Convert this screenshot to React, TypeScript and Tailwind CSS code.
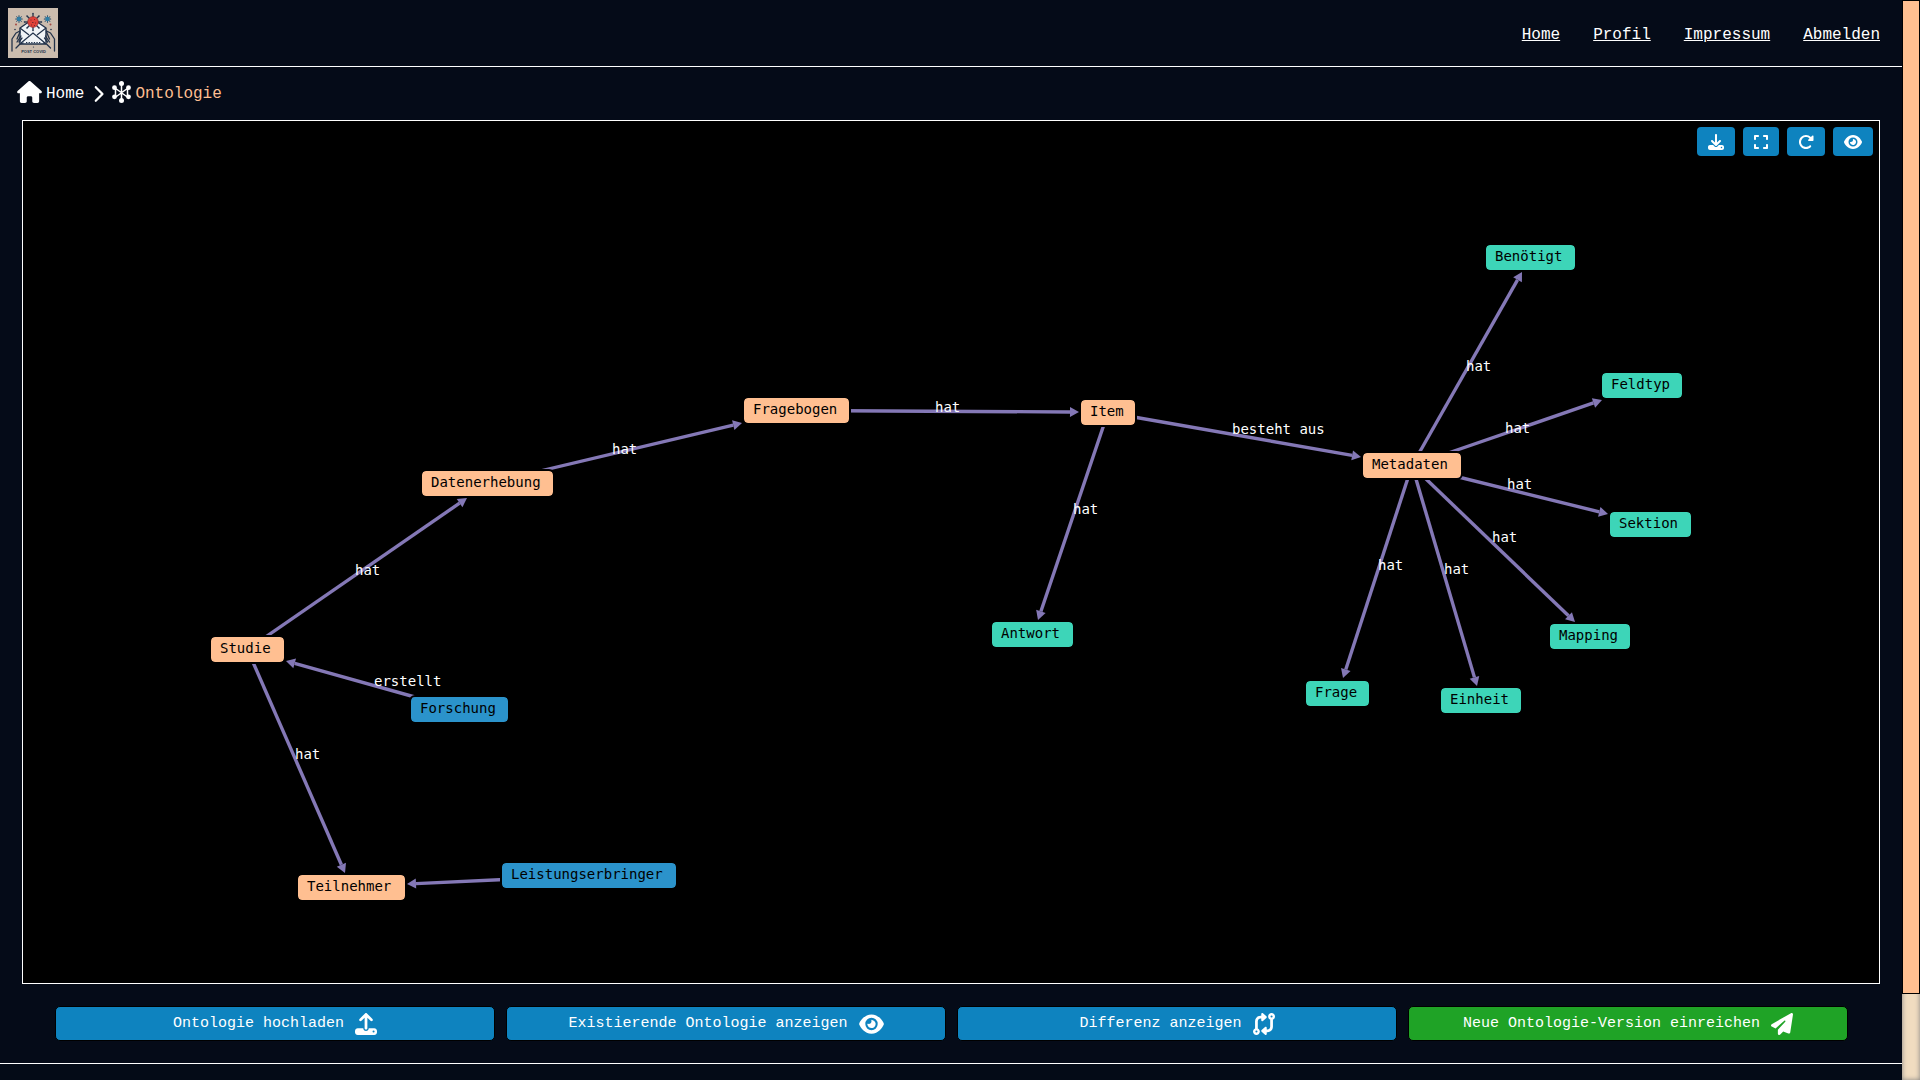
import React from "react";
import {
  FaHouse,
  FaChevronRight,
  FaDownload,
  FaExpand,
  FaRotateRight,
  FaEye,
  FaUpload,
  FaCodeCompare,
  FaPaperPlane,
} from "react-icons/fa6";

type Kind = "core" | "leaf" | "actor";
type GraphNode = { label: string; x: number; y: number; w: number; kind: Kind };
type GraphEdge = {
  from: string;
  tip: [number, number];
  label?: string;
  at?: [number, number];
};

const NODE_HEIGHT = 25;

const kindClass: Record<Kind, string> = {
  core: "bg-[#ffbf91]",
  leaf: "bg-[#3dd5b8]",
  actor: "bg-[#2b93cb]",
};

const nodes: GraphNode[] = [
  { label: "Studie", x: 188, y: 516, w: 73, kind: "core" },
  { label: "Datenerhebung", x: 399, y: 350, w: 131, kind: "core" },
  { label: "Forschung", x: 388, y: 576, w: 97, kind: "actor" },
  { label: "Teilnehmer", x: 275, y: 754, w: 107, kind: "core" },
  { label: "Leistungserbringer", x: 479, y: 742, w: 174, kind: "actor" },
  { label: "Fragebogen", x: 721, y: 277, w: 105, kind: "core" },
  { label: "Item", x: 1058, y: 279, w: 54, kind: "core" },
  { label: "Antwort", x: 969, y: 501, w: 81, kind: "leaf" },
  { label: "Benötigt", x: 1463, y: 124, w: 89, kind: "leaf" },
  { label: "Feldtyp", x: 1579, y: 252, w: 80, kind: "leaf" },
  { label: "Metadaten", x: 1340, y: 332, w: 98, kind: "core" },
  { label: "Sektion", x: 1587, y: 391, w: 81, kind: "leaf" },
  { label: "Mapping", x: 1527, y: 503, w: 80, kind: "leaf" },
  { label: "Frage", x: 1283, y: 560, w: 63, kind: "leaf" },
  { label: "Einheit", x: 1418, y: 567, w: 80, kind: "leaf" },
];

const edges: GraphEdge[] = [
  { from: "Studie", tip: [444, 377], label: "hat", at: [332, 454] },
  { from: "Datenerhebung", tip: [719, 302], label: "hat", at: [589, 333] },
  { from: "Fragebogen", tip: [1056, 291], label: "hat", at: [912, 291] },
  { from: "Item", tip: [1338, 336], label: "besteht aus", at: [1209, 313] },
  { from: "Item", tip: [1015, 499], label: "hat", at: [1050, 393] },
  { from: "Studie", tip: [322, 752], label: "hat", at: [272, 638] },
  { from: "Forschung", tip: [263, 540], label: "erstellt", at: [351, 565] },
  { from: "Leistungserbringer", tip: [384, 763] },
  { from: "Metadaten", tip: [1499, 151], label: "hat", at: [1443, 250] },
  { from: "Metadaten", tip: [1579, 279], label: "hat", at: [1482, 312] },
  { from: "Metadaten", tip: [1585, 393], label: "hat", at: [1484, 368] },
  { from: "Metadaten", tip: [1552, 501], label: "hat", at: [1469, 421] },
  { from: "Metadaten", tip: [1320, 557], label: "hat", at: [1355, 449] },
  { from: "Metadaten", tip: [1454, 565], label: "hat", at: [1421, 453] },
];

function Edge({ edge }: { edge: GraphEdge }) {
  const node = nodes.find((n) => n.label === edge.from)!;
  const x1 = node.x + node.w / 2;
  const y1 = node.y + NODE_HEIGHT / 2;
  const [tx, ty] = edge.tip;
  const len = Math.hypot(tx - x1, ty - y1);
  const ux = (tx - x1) / len;
  const uy = (ty - y1) / len;
  const bx = tx - ux * 9;
  const by = ty - uy * 9;
  const points = [
    [tx, ty],
    [bx - uy * 5, by + ux * 5],
    [bx + uy * 5, by - ux * 5],
  ]
    .map((p) => p.join(","))
    .join(" ");
  return (
    <g>
      <line x1={x1} y1={y1} x2={bx} y2={by} stroke="#8478b6" strokeWidth="3.4" />
      <polygon points={points} fill="#8478b6" />
    </g>
  );
}

function Graph() {
  return (
    <div className="absolute inset-0 overflow-hidden font-['DejaVu_Sans_Mono','Liberation_Mono',monospace] text-[14px]">
      <svg className="absolute inset-0 size-full" aria-hidden="true">
        {edges.map((e, i) => (
          <Edge key={i} edge={e} />
        ))}
      </svg>
      {nodes.map((n) => (
        <div
          key={n.label}
          className={`absolute h-[25px] rounded-[4px] pl-[9px] leading-[23px] whitespace-nowrap text-black outline-2 outline-black ${kindClass[n.kind]}`}
          style={{ left: n.x, top: n.y, width: n.w }}
        >
          {n.label}
        </div>
      ))}
      {edges.map(
        (e, i) =>
          e.label &&
          e.at && (
            <span
              key={i}
              className="absolute leading-5 whitespace-nowrap text-white"
              style={{ left: e.at[0], top: e.at[1] - 15 }}
            >
              {e.label}
            </span>
          ),
      )}
    </div>
  );
}

function NodesIcon() {
  return (
    <svg viewBox="0 0 19 22" className="h-[22px] w-[19px] text-white" fill="currentColor" stroke="currentColor" aria-hidden="true">
      <path
        d="M9.500 3v16M3 7l13 9.500M16 7 3 16.500M3.500 7v9.500M15.500 7v9.500"
        fill="none"
        strokeWidth="1.5"
      />
      <g stroke="none">
        <circle cx="9.500" cy="2.600" r="2.500" />
        <circle cx="9.500" cy="19.400" r="2.500" />
        <circle cx="2.500" cy="6.700" r="2.400" />
        <circle cx="16.500" cy="6.700" r="2.400" />
        <circle cx="2.500" cy="15.800" r="2.400" />
        <circle cx="16.500" cy="15.800" r="2.400" />
      </g>
    </svg>
  );
}

type SpikesProps = { cx: number; cy: number; r1: number; r2: number; n: number; color: string; width: number };

function Spikes({ cx, cy, r1, r2, n, color, width }: SpikesProps) {
  return (
    <g stroke={color} strokeWidth={width} fill={color}>
      {Array.from({ length: n }, (_, i) => {
        const a = (i * 2 * Math.PI) / n - Math.PI / 2;
        const c = Math.cos(a);
        const s = Math.sin(a);
        return (
          <g key={i}>
            <line x1={cx + c * r1} y1={cy + s * r1} x2={cx + c * r2} y2={cy + s * r2} />
            <circle cx={cx + c * r2} cy={cy + s * r2} r={width * 0.6} stroke="none" />
          </g>
        );
      })}
    </g>
  );
}

function Logo() {
  const ink = "#22324a";
  const hand = "M4 43V31l4-6 4-2M8 40l4-4 3-1M12 24l-3 7M13 28l-4 6M14 30l-3 4";
  return (
    <svg viewBox="0 0 50 50" className="size-[50px]" role="img" aria-label="Post Covid">
      <rect width="50" height="50" fill="#cbbcae" />
      <path d="M12 20 25 11l13 9v16H12z" fill="#f1f4f7" stroke={ink} strokeWidth="1.4" strokeLinejoin="round" />
      <path d="m12 20 9 7m17-7-9 7M13 35l12-10 12 10" fill="none" stroke={ink} strokeWidth="1.2" />
      <path d="M18 34.500h15" stroke={ink} strokeWidth="1.2" strokeDasharray="1.300 1.300" />
      <Spikes cx={25} cy={14} r1={5} r2={8.5} n={8} color={ink} width={1.3} />
      <circle cx="25" cy="14" r="5.4" fill="#e0433a" stroke="#7c2a30" strokeWidth="0.6" />
      <path d="M22.500 12h1M26 11.500h1M24 14.500h1.500M27 15h1M23 17h1M26 17.500h1" stroke="#7c2a30" strokeWidth="1" />
      <Spikes cx={11} cy={11} r1={1} r2={3.2} n={8} color="#2c4f6b" width={0.9} />
      <circle cx="11" cy="11" r="2.200" fill="#2f7ea6" />
      <Spikes cx={39.5} cy={11} r1={1} r2={3.2} n={8} color="#2c4f6b" width={0.9} />
      <circle cx="39.500" cy="11" r="2.200" fill="#2f7ea6" />
      <g fill="#a34a44">
        <circle cx="8" cy="16.500" r="1" />
        <circle cx="42.500" cy="16.500" r="1" />
      </g>
      <g fill={ink}>
        <circle cx="7" cy="21.500" r="0.8" />
        <circle cx="43" cy="21.500" r="0.8" />
        <circle cx="25.500" cy="39" r="0.6" />
      </g>
      <g fill="none" stroke={ink} strokeWidth="1.3" strokeLinecap="round" strokeLinejoin="round">
        <path d={hand} />
        <path d={hand} transform="translate(50.500 0) scale(-1 1)" />
      </g>
      <text x="25.500" y="45" textAnchor="middle" fontSize="4" fontWeight="700" fill={ink} fontFamily="Liberation Sans, sans-serif">
        POST COVID
      </text>
    </svg>
  );
}

const tools = [
  { label: "Herunterladen", Icon: FaDownload, size: "w-4" },
  { label: "Vollbild", Icon: FaExpand, size: "w-3.5" },
  { label: "Neu laden", Icon: FaRotateRight, size: "w-4" },
  { label: "Anzeigen", Icon: FaEye, size: "w-[18px]" },
];

const actions = [
  { label: "Ontologie hochladen", Icon: FaUpload, size: "w-[22px]", color: "bg-[#0e83bf]" },
  { label: "Existierende Ontologie anzeigen", Icon: FaEye, size: "w-[25px]", color: "bg-[#0e83bf]" },
  { label: "Differenz anzeigen", Icon: FaCodeCompare, size: "w-[22px]", color: "bg-[#0e83bf]" },
  { label: "Neue Ontologie-Version einreichen", Icon: FaPaperPlane, size: "w-[22px]", color: "bg-[#1fa326]" },
];

export default function App() {
  return (
    <div className="flex h-screen bg-[#050b18] font-['Liberation_Mono',monospace] text-white">
      <div className="flex min-w-0 flex-1 flex-col">
        <header className="flex items-center justify-between border-b border-white p-2 pr-[22px]">
          <a href="#start">
            <Logo />
          </a>
          <nav className="flex gap-[33px] pt-[3px] text-base">
            {["Home", "Profil", "Impressum", "Abmelden"].map((l) => (
              <a key={l} href={`#${l.toLowerCase()}`} className="underline">
                {l}
              </a>
            ))}
          </nav>
        </header>

        <nav aria-label="Breadcrumb" className="flex h-[53px] items-center gap-2 pb-[3px] pl-[17px] text-base">
          <a href="#home" className="flex items-center gap-1">
            <FaHouse className="h-[22px] w-[25px]" />
            <span className="pt-1">Home</span>
          </a>
          <FaChevronRight className="mt-1 h-[18px] w-3" />
          <a href="#ontologie" className="flex items-center gap-1 text-[#ffbf91]">
            <NodesIcon />
            <span className="pt-1">Ontologie</span>
          </a>
        </nav>

        <main className="flex flex-1 flex-col">
          <section className="relative mx-[22px] min-h-[80vh] border border-white bg-black" aria-label="Ontologie-Graph">
            <Graph />
            <div className="relative flex justify-end gap-2 p-1.5">
              {tools.map(({ label, Icon, size }) => (
                <button
                  key={label}
                  type="button"
                  aria-label={label}
                  className="flex h-[29px] items-center rounded-[4px] bg-[#0e83bf] px-[11px]"
                >
                  <Icon className={`h-4 ${size}`} />
                </button>
              ))}
            </div>
          </section>

          <div className="my-[22px] mr-[54px] ml-[55px] grid grid-cols-4 gap-[11px]">
            {actions.map(({ label, Icon, size, color }) => (
              <button
                key={label}
                type="button"
                className={`flex h-[35px] items-center justify-center gap-[11px] rounded-[5px] border border-black text-[15px] ${color}`}
              >
                <span className="pt-0.5">{label}</span>
                <Icon className={`h-[22px] ${size}`} />
              </button>
            ))}
          </div>
        </main>

        <footer className="h-[17px] border-t border-white bg-[#040b17]" />
      </div>

      <div className="flex w-[18px] flex-col bg-[#f0dcc0] shadow-[inset_0_0_5px_#808080]" aria-hidden="true">
        <div className="h-[92%] border border-black bg-[#ffbf91]" />
      </div>
    </div>
  );
}
